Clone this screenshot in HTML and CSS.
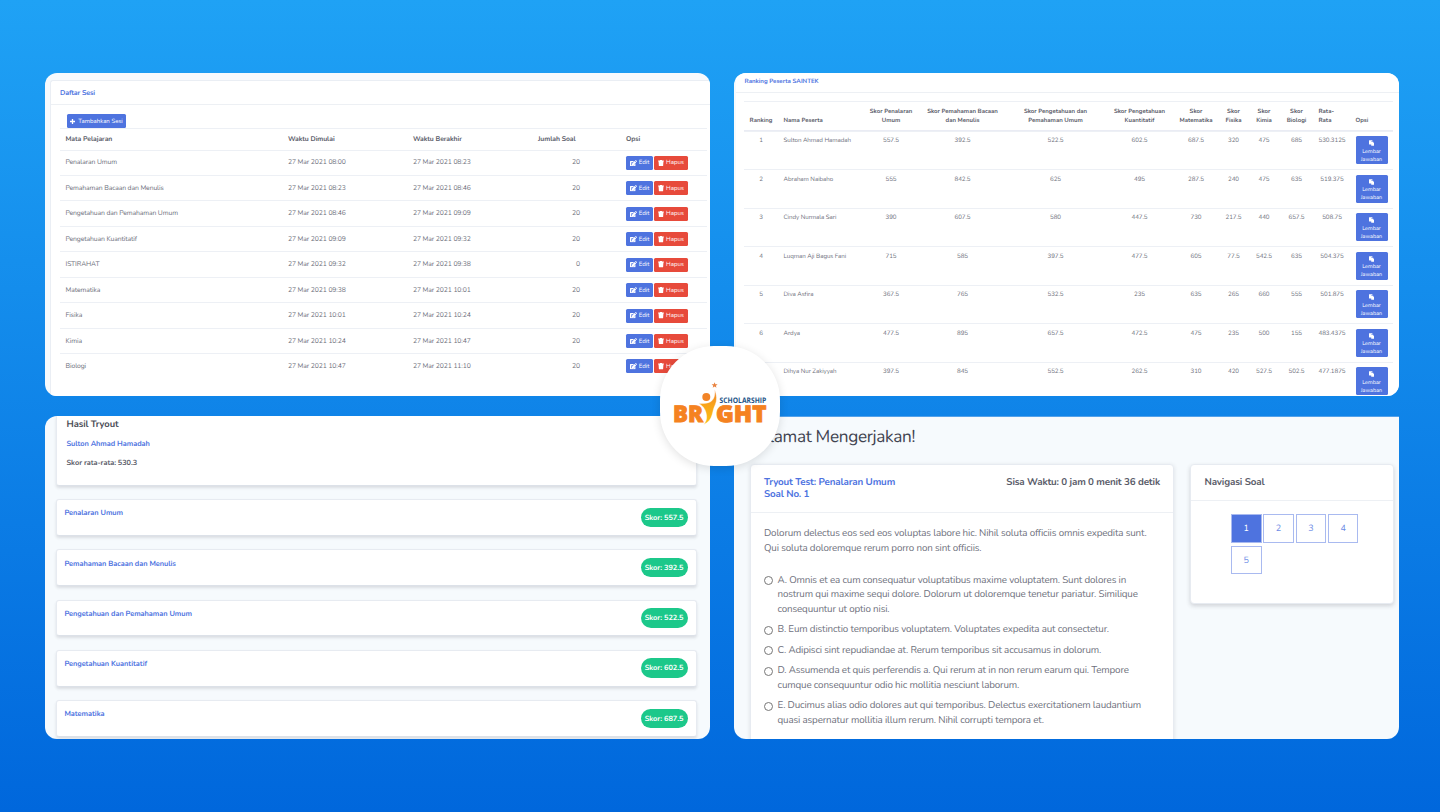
FILE: index.html
```html
<!DOCTYPE html>
<html lang="id">
<head>
<meta charset="utf-8">
<title>Bright Scholarship</title>
<link rel="stylesheet" href="styles.css">
</head>
<body>
<svg class="sprite" aria-hidden="true">
  <symbol id="edit" viewBox="0 0 18 16"><path fill="currentColor" fill-rule="evenodd" d="M1.500 2h9L7 5.500H3.500v7.500H11V10.500l3-3v7a1.500 1.500 0 0 1-1.500 1.500h-11A1.500 1.500 0 0 1 0 14.500v-11A1.500 1.500 0 0 1 1.500 2zM12 2l4 4-6.500 6.500-4.500.5.5-4.500zM13 1l.6-.6a1.400 1.400 0 0 1 2 0L17.600 2.400a1.400 1.400 0 0 1 0 2L17 5z"/></symbol>
  <symbol id="trash" viewBox="0 0 14 16"><path fill="currentColor" d="M0 1h4l1-1h4l1 1h4v2.500H0zM1 3.500h12l-.8 11.100A1.500 1.500 0 0 1 10.700 16H3.300a1.500 1.500 0 0 1-1.500-1.400z"/></symbol>
  <symbol id="copy" viewBox="0 0 16 16"><path fill="currentColor" d="M1 0h8a1 1 0 0 1 1 1v2H6.500v9H1a1 1 0 0 1-1-1V1a1 1 0 0 1 1-1zM6.500 4H12v4h4v7a1 1 0 0 1-1 1H7.500a1 1 0 0 1-1-1zM13 4l3 3h-3z"/></symbol>
</svg>
<main class="stage">
  <section class="panel sessions">
    <div class="sheet">
      <h2 class="sheet-title">Daftar Sesi</h2>
      <div class="sheet-body">
        <button class="btn add"><svg viewBox="0 0 10 10"><path d="M5 0v10M0 5h10" stroke="#fff" stroke-width="2.600"/></svg>Tambahkan Sesi</button>
        <table class="session-table">
          <colgroup><col class="s-name"><col class="s-time"><col class="s-time"><col class="s-count"><col></colgroup>
          <thead><tr><th>Mata Pelajaran</th><th>Waktu Dimulai</th><th>Waktu Berakhir</th><th>Jumlah Soal</th><th>Opsi</th></tr></thead>
          <tbody>
            <tr><td>Penalaran Umum</td><td>27 Mar 2021 08:00</td><td>27 Mar 2021 08:23</td><td class="num">20</td><td><div class="ops"><button class="btn"><svg><use href="#edit"/></svg>Edit</button><button class="btn red"><svg><use href="#trash"/></svg>Hapus</button></div></td></tr>
            <tr><td>Pemahaman Bacaan dan Menulis</td><td>27 Mar 2021 08:23</td><td>27 Mar 2021 08:46</td><td class="num">20</td><td><div class="ops"><button class="btn"><svg><use href="#edit"/></svg>Edit</button><button class="btn red"><svg><use href="#trash"/></svg>Hapus</button></div></td></tr>
            <tr><td>Pengetahuan dan Pemahaman Umum</td><td>27 Mar 2021 08:46</td><td>27 Mar 2021 09:09</td><td class="num">20</td><td><div class="ops"><button class="btn"><svg><use href="#edit"/></svg>Edit</button><button class="btn red"><svg><use href="#trash"/></svg>Hapus</button></div></td></tr>
            <tr><td>Pengetahuan Kuantitatif</td><td>27 Mar 2021 09:09</td><td>27 Mar 2021 09:32</td><td class="num">20</td><td><div class="ops"><button class="btn"><svg><use href="#edit"/></svg>Edit</button><button class="btn red"><svg><use href="#trash"/></svg>Hapus</button></div></td></tr>
            <tr><td>ISTIRAHAT</td><td>27 Mar 2021 09:32</td><td>27 Mar 2021 09:38</td><td class="num">0</td><td><div class="ops"><button class="btn"><svg><use href="#edit"/></svg>Edit</button><button class="btn red"><svg><use href="#trash"/></svg>Hapus</button></div></td></tr>
            <tr><td>Matematika</td><td>27 Mar 2021 09:38</td><td>27 Mar 2021 10:01</td><td class="num">20</td><td><div class="ops"><button class="btn"><svg><use href="#edit"/></svg>Edit</button><button class="btn red"><svg><use href="#trash"/></svg>Hapus</button></div></td></tr>
            <tr><td>Fisika</td><td>27 Mar 2021 10:01</td><td>27 Mar 2021 10:24</td><td class="num">20</td><td><div class="ops"><button class="btn"><svg><use href="#edit"/></svg>Edit</button><button class="btn red"><svg><use href="#trash"/></svg>Hapus</button></div></td></tr>
            <tr><td>Kimia</td><td>27 Mar 2021 10:24</td><td>27 Mar 2021 10:47</td><td class="num">20</td><td><div class="ops"><button class="btn"><svg><use href="#edit"/></svg>Edit</button><button class="btn red"><svg><use href="#trash"/></svg>Hapus</button></div></td></tr>
            <tr><td>Biologi</td><td>27 Mar 2021 10:47</td><td>27 Mar 2021 11:10</td><td class="num">20</td><td><div class="ops"><button class="btn"><svg><use href="#edit"/></svg>Edit</button><button class="btn red"><svg><use href="#trash"/></svg>Hapus</button></div></td></tr>
          </tbody>
        </table>
      </div>
    </div>
  </section>

  <section class="panel ranking">
    <div class="rank-sheet">
      <h2 class="rank-title">Ranking Peserta SAINTEK</h2>
      <table class="rank-table">
        <colgroup><col class="c34"><col class="c88"><col class="c50"><col class="c93"><col class="c93"><col class="c75"><col class="c38"><col class="c37"><col class="c24"><col class="c41"><col class="c30"><col></colgroup>
        <thead><tr><th>Ranking</th><th class="left">Nama Peserta</th><th>Skor Penalaran<br>Umum</th><th>Skor Pemahaman Bacaan<br>dan Menulis</th><th>Skor Pengetahuan dan<br>Pemahaman Umum</th><th>Skor Pengetahuan<br>Kuantitatif</th><th>Skor<br>Matematika</th><th>Skor<br>Fisika</th><th>Skor<br>Kimia</th><th>Skor<br>Biologi</th><th class="rata">Rata-<br>Rata</th><th class="opt">Opsi</th></tr></thead>
        <tbody>
          <tr><td>1</td><td class="left">Sulton Ahmad Hamadah</td><td>557.5</td><td>392.5</td><td>522.5</td><td>602.5</td><td>687.5</td><td>320</td><td>475</td><td>685</td><td>530.3125</td><td class="opt"><button class="answer"><svg><use href="#copy"/></svg>Lembar<br>Jawaban</button></td></tr>
          <tr><td>2</td><td class="left">Abraham Naibaho</td><td>555</td><td>842.5</td><td>625</td><td>495</td><td>287.5</td><td>240</td><td>475</td><td>635</td><td>519.375</td><td class="opt"><button class="answer"><svg><use href="#copy"/></svg>Lembar<br>Jawaban</button></td></tr>
          <tr><td>3</td><td class="left">Cindy Nurmala Sari</td><td>390</td><td>607.5</td><td>580</td><td>447.5</td><td>730</td><td>217.5</td><td>440</td><td>657.5</td><td>508.75</td><td class="opt"><button class="answer"><svg><use href="#copy"/></svg>Lembar<br>Jawaban</button></td></tr>
          <tr><td>4</td><td class="left">Luqman Aji Bagus Fani</td><td>715</td><td>585</td><td>397.5</td><td>477.5</td><td>605</td><td>77.5</td><td>542.5</td><td>635</td><td>504.375</td><td class="opt"><button class="answer"><svg><use href="#copy"/></svg>Lembar<br>Jawaban</button></td></tr>
          <tr><td>5</td><td class="left">Diva Asfira</td><td>367.5</td><td>765</td><td>532.5</td><td>235</td><td>635</td><td>265</td><td>660</td><td>555</td><td>501.875</td><td class="opt"><button class="answer"><svg><use href="#copy"/></svg>Lembar<br>Jawaban</button></td></tr>
          <tr><td>6</td><td class="left">Ardya</td><td>477.5</td><td>895</td><td>657.5</td><td>472.5</td><td>475</td><td>235</td><td>500</td><td>155</td><td>483.4375</td><td class="opt"><button class="answer"><svg><use href="#copy"/></svg>Lembar<br>Jawaban</button></td></tr>
          <tr><td>7</td><td class="left">Dihya Nur Zakiyyah</td><td>397.5</td><td>845</td><td>552.5</td><td>262.5</td><td>310</td><td>420</td><td>527.5</td><td>502.5</td><td>477.1875</td><td class="opt"><button class="answer"><svg><use href="#copy"/></svg>Lembar<br>Jawaban</button></td></tr>
        </tbody>
      </table>
    </div>
  </section>

  <section class="panel results">
    <div class="summary">
      <h2>Hasil Tryout</h2>
      <h3>Sulton Ahmad Hamadah</h3>
      <p>Skor rata-rata: 530.3</p>
    </div>
    <div class="score"><h3>Penalaran Umum</h3><span class="badge">Skor: 557.5</span></div>
    <div class="score"><h3>Pemahaman Bacaan dan Menulis</h3><span class="badge">Skor: 392.5</span></div>
    <div class="score"><h3>Pengetahuan dan Pemahaman Umum</h3><span class="badge">Skor: 522.5</span></div>
    <div class="score"><h3>Pengetahuan Kuantitatif</h3><span class="badge">Skor: 602.5</span></div>
    <div class="score"><h3>Matematika</h3><span class="badge">Skor: 687.5</span></div>
  </section>

  <section class="panel exam">
    <h1>Selamat Mengerjakan!</h1>
    <div class="exam-columns">
      <article class="question">
        <header><h2>Tryout Test: Penalaran Umum<br>Soal No. 1</h2><strong>Sisa Waktu: 0 jam 0 menit 36 detik</strong></header>
        <div class="question-body">
          <p>Dolorum delectus eos sed eos voluptas labore hic. Nihil soluta officiis omnis expedita sunt.<br>Qui soluta doloremque rerum porro non sint officiis.</p>
          <ul>
            <li><i class="radio"></i><span>A. Omnis et ea cum consequatur voluptatibus maxime voluptatem. Sunt dolores in<br>nostrum qui maxime sequi dolore. Dolorum ut doloremque tenetur pariatur. Similique<br>consequuntur ut optio nisi.</span></li>
            <li><i class="radio"></i><span>B. Eum distinctio temporibus voluptatem. Voluptates expedita aut consectetur.</span></li>
            <li><i class="radio"></i><span>C. Adipisci sint repudiandae at. Rerum temporibus sit accusamus in dolorum.</span></li>
            <li><i class="radio"></i><span>D. Assumenda et quis perferendis a. Qui rerum at in non rerum earum qui. Tempore<br>cumque consequuntur odio hic mollitia nesciunt laborum.</span></li>
            <li><i class="radio"></i><span>E. Ducimus alias odio dolores aut qui temporibus. Delectus exercitationem laudantium<br>quasi aspernatur mollitia illum rerum. Nihil corrupti tempora et.</span></li>
          </ul>
        </div>
      </article>
      <aside class="navigator">
        <h2>Navigasi Soal</h2>
        <div class="numbers"><span class="current">1</span><span>2</span><span>3</span><span>4</span><span>5</span></div>
      </aside>
    </div>
  </section>

  <div class="logo">
    <svg viewBox="0 0 120 120">
      <defs><linearGradient id="gold" x1="0" y1="1" x2="0" y2="0"><stop offset="0" stop-color="#fbc012"/><stop offset=".55" stop-color="#f9a51a"/><stop offset="1" stop-color="#f0802a"/></linearGradient></defs>
      <text class="bright" x="13" y="76" textLength="30" lengthAdjust="spacingAndGlyphs">BR</text>
      <text class="bright" x="56" y="76" textLength="50.500" lengthAdjust="spacingAndGlyphs">GHT</text>
      <text class="scholar" x="59.600" y="57" textLength="46.700" lengthAdjust="spacingAndGlyphs">SCHOLARSHIP</text>
      <circle cx="46.300" cy="51" r="4" fill="#f28427"/>
      <path fill="url(#gold)" stroke="#fff" stroke-width=".4" d="M54.700 43.500c2.300 6 2.400 11 .5 15.200-1.700 3.600-2.200 6.600-3.200 10.300-1.200 4.300-3.900 7.700-8.200 9.500 2-2.500 3.100-5 2.800-8.400-.4-5.400-2.800-9.900-7.800-12.700 4.700 0 8.500.2 11.800-1.700 3.600-2.200 4.700-7 4.100-12.200z"/>
      <path fill="#e9823f" d="M54.600 36.200l.8 2 2.200.1-1.700 1.400.6 2.100-1.900-1.200-1.900 1.200.6-2.100-1.700-1.400 2.200-.1z"/>
    </svg>
  </div>
</main>
</body>
</html>
```
FILE: styles.css
```css
* { box-sizing: border-box; }
body { margin: 0; font-family: Nunito, Lato, "Open Sans", sans-serif; color: #858796; text-rendering: geometricPrecision; }
h1, h2, h3, p, ul { margin: 0; padding: 0; }
button { font-family: inherit; text-rendering: inherit; }
.sprite { display: none; }
.stage {
  position: relative;
  width: 1440px;
  height: 812px;
  overflow: hidden;
  padding: 73px 41px 73px 45px;
  display: grid;
  grid-template: 323px 323px / 665px 665px;
  gap: 20px 24px;
  background: linear-gradient(180deg, #1fa2f5 0%, #0067dc 100%);
}
.panel { overflow: hidden; border-radius: 12px; background: #f6fafd; }

.sessions { padding: 7px 0 0 5px; }
.sheet { height: 330px; background: #fff; border-top: 1px solid #eaeef4; border-left: 1px solid #eaeef4; border-radius: 3px 0 0 0; }
.sheet-title { height: 24px; padding-left: 9px; border-bottom: 1px solid #edf0f4; color: #4e73df; font-size: 7.100px; line-height: 25px; letter-spacing: -.15px; }
.sheet-body { padding: 9px 0 0 9px; }
.btn { display: flex; align-items: center; justify-content: center; gap: 2px; width: 27px; height: 14px; padding: 1px 0 0; border: 0; border-radius: 1.500px; background: #4e73df; color: #fff; font-size: 6.100px; line-height: 14px; white-space: nowrap; }
.btn svg { width: 7px; height: 6.500px; flex: none; margin-top: -1px; }
.btn.red { width: 34px; background: #e74a3b; }
.btn.red svg { width: 6px; }
.btn.add { width: 59px; margin-left: 7px; gap: 3px; }
.btn.add svg { width: 5px; height: 5px; }
.session-table { width: 647px; table-layout: fixed; border-collapse: separate; border-spacing: 0; font-size: 6.800px; }
.session-table th, .session-table td { padding: 0 0 0 5.500px; text-align: left; white-space: nowrap; border-top: 1px solid #edf0f5; }
.session-table th { height: 21.500px; color: #5a5c69; letter-spacing: -.05px; }
.session-table td { height: 25.450px; padding-top: .5px; color: #6e707c; letter-spacing: -.1px; }
.s-name { width: 222.500px; }
.s-time { width: 125px; }
.s-count { width: 88px; }
.session-table .num { padding-right: 40.500px; text-align: right; }
.ops { display: flex; gap: 1px; }

.rank-sheet { height: 323px; margin-left: 2px; padding-left: 8px; background: #fff; }
.rank-title { height: 19.500px; margin-left: -8px; padding-left: 8.500px; border-bottom: 1px solid #edf0f4; color: #4e73df; font-size: 6.100px; line-height: 19.500px; }
.rank-table { width: 649px; margin-top: 8.500px; table-layout: fixed; border-collapse: separate; border-spacing: 0; font-size: 6.200px; line-height: 9px; }
.rank-table th, .rank-table td { padding: 0; text-align: center; white-space: nowrap; border-top: 1px solid #edf0f5; }
.rank-table th { height: 29.500px; padding-bottom: 3.300px; vertical-align: bottom; color: #5a5c69; font-size: 6px; border-bottom: 1px solid #eaecf4; }
.rank-table td { height: 38.500px; padding-top: 5.900px; vertical-align: top; color: #6e707c; letter-spacing: -.05px; }
.rank-table .left { padding-left: 5.500px; text-align: left; }
.rank-table .rata { padding-left: 1.500px; text-align: left; }
.rank-table .opt { padding-left: 8.500px; text-align: left; }
.rank-table td.opt { padding-top: 4.800px; }
.c24 { width: 24px; } .c30 { width: 30px; } .c34 { width: 34px; } .c37 { width: 37px; }
.c38 { width: 38px; } .c41 { width: 41px; } .c50 { width: 50px; } .c75 { width: 75px; }
.c88 { width: 88px; } .c93 { width: 93px; }
.answer { display: block; width: 32px; height: 28px; padding: 2px 0 0; border: 0; border-radius: 1.500px; background: #4e73df; color: #fff; font-size: 5.500px; line-height: 7.800px; text-align: center; }
.answer svg { display: block; width: 5.500px; height: 6px; margin: 1px auto 1.500px; }

.results { padding: 0 13.500px 0 10.500px; }
.summary, .score { background: #fff; border: 1px solid #e7ebf1; border-bottom-color: #dce1e8; border-radius: 3px; box-shadow: 0 2px 3px rgba(58, 59, 69, .14); }
.summary { height: 70px; margin-bottom: 13px; padding: 2.500px 10px; border-top: 0; border-radius: 0 0 3px 3px; }
.summary h2 { color: #4a4c56; font-size: 9.400px; line-height: 13px; letter-spacing: -.1px; }
.summary h3, .score h3 { color: #4e73df; font-size: 7.400px; line-height: 11px; letter-spacing: -.06px; }
.summary h3 { margin-top: 7px; }
.summary p { margin-top: 8px; color: #5a5c69; font-size: 7.400px; font-weight: 700; line-height: 11px; letter-spacing: -.06px; }
.score { display: flex; justify-content: space-between; height: 36.700px; margin-bottom: 13.600px; padding: 7.500px 8px 0; }
.score h3 { padding-top: .8px; }
.badge { width: 47px; height: 19.500px; border-radius: 10px; background: #1cc88a; color: #fff; font-size: 7.400px; font-weight: 700; line-height: 20px; letter-spacing: -.05px; text-align: center; white-space: nowrap; }

.exam { padding: 0 5px 0 16px; border-radius: 0 0 12px 12px; border-top: 1px solid #53a1ea; }
.exam h1 { height: 47px; padding-top: 9px; color: #3f4350; font-size: 17.200px; font-weight: 400; line-height: 24px; letter-spacing: -.33px; white-space: nowrap; }
.exam-columns { display: grid; grid-template-columns: 424px 204px; gap: 16px; align-items: start; }
.question, .navigator { background: #fff; border: 1px solid #e7ebf1; border-radius: 4px; box-shadow: 0 1px 4px rgba(58, 59, 69, .14); }
.question { height: 290px; }
.question header { display: flex; justify-content: space-between; height: 47.500px; padding: 12px 13px 0; border-bottom: 1px solid #edf0f4; font-size: 9.800px; line-height: 12px; letter-spacing: -.15px; white-space: nowrap; }
.question h2 { color: #4e73df; font-size: inherit; }
.question strong { color: #5a5c69; }
.question-body { padding: 14.900px 13px 0; font-size: 9.800px; line-height: 14.600px; letter-spacing: -.15px; color: #6e707c; white-space: nowrap; }
.question ul { margin-top: 17px; list-style: none; }
.question li { display: flex; gap: 4.500px; margin-bottom: 5.900px; }
.radio { width: 9px; height: 9px; flex: none; margin-top: 2.600px; border: 1px solid #777; border-radius: 50%; }
.navigator { height: 140px; box-shadow: 0 2px 4px rgba(58, 59, 69, .2); }
.navigator h2 { height: 35.500px; padding-left: 13.500px; border-bottom: 1px solid #edf0f4; color: #5a5c69; font-size: 9.800px; line-height: 36.500px; letter-spacing: -.15px; }
.numbers { display: grid; grid-template-columns: repeat(4, 30.500px); grid-auto-rows: 28.500px; gap: 3.200px 1.800px; padding: 13.500px 0 0 40px; }
.numbers span { border: 1px solid #a9baf0; color: #6c8be5; font-size: 9px; line-height: 28px; text-align: center; }
.numbers .current { background: #4e73df; color: #fff; }

.logo { position: absolute; left: 660px; top: 346px; width: 120px; height: 120px; border-radius: 54px; background: #fff; box-shadow: 0 2px 10px rgba(0, 0, 0, .12); }
.logo svg { display: block; width: 120px; height: 120px; }
.bright { font-family: "Open Sans", sans-serif; font-weight: 800; font-size: 23px; fill: #f58220; stroke: #f58220; stroke-width: .9px; }
.scholar { font-family: "Open Sans", sans-serif; font-weight: 700; font-size: 7.600px; fill: #1d5487; }
```
